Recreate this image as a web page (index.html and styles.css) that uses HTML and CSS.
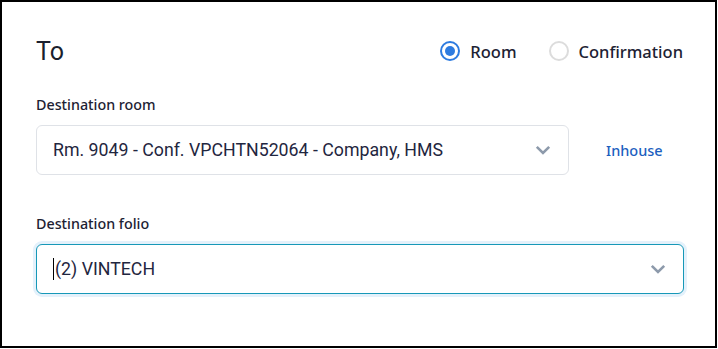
FILE: index.html
```html
<!DOCTYPE html>
<html lang="en">
  <head>
    <meta charset="UTF-8" />
    <meta name="viewport" content="width=device-width, initial-scale=1.0" />
    <title>Transfer To</title>
    <link rel="stylesheet" href="styles.css">
  </head>
  <body>
    <div class="panel">
      <div class="panel-header">
        <h2>To</h2>
        <div class="radio-group">
          <label class="radio">
            <input type="radio" name="target" value="room" checked />
            <span class="radio-mark"></span>
            <span class="radio-text">Room</span>
          </label>
          <label class="radio">
            <input type="radio" name="target" value="confirmation" />
            <span class="radio-mark"></span>
            <span class="radio-text">Confirmation</span>
          </label>
        </div>
      </div>

      <div class="form-group">
        <label class="field-label">Destination room</label>
        <div class="field-row">
          <div class="select">
            <span class="select-value">Rm. 9049 - Conf. VPCHTN52064 - Company, HMS</span>
            <svg class="chevron" width="16" height="10" viewBox="0 0 16 10"><path d="M1.8 1.8 L8 8 L14.2 1.8" fill="none" stroke="#8d9aab" stroke-width="2.6"/></svg>
          </div>
          <a href="#" class="link">Inhouse</a>
        </div>
      </div>

      <div class="form-group">
        <label class="field-label">Destination folio</label>
        <div class="select focused">
          <span class="caret"></span>
          <span class="select-value">(2) VINTECH</span>
          <svg class="chevron" width="16" height="10" viewBox="0 0 16 10"><path d="M1.8 1.8 L8 8 L14.2 1.8" fill="none" stroke="#8d9aab" stroke-width="2.6"/></svg>
        </div>
      </div>
    </div>
  </body>
</html>
```

FILE: styles.css
```css
* {
  margin: 0;
  padding: 0;
  box-sizing: border-box;
}

body {
  font-family: 'Noto Sans', 'Open Sans', sans-serif;
  background: #fff;
  color: #1d2233;
}

.panel {
  width: 717px;
  height: 348px;
  border: 2px solid #000;
  padding: 30px 31px 0 34px;
}

.panel-header {
  display: flex;
  align-items: center;
  justify-content: space-between;
  height: 38px;
}

h2 {
  font-family: 'Roboto', sans-serif;
  font-weight: 400;
  font-size: 25px;
  color: #1a1f2e;
}

.radio-group {
  display: flex;
  gap: 32px;
  margin-right: 1px;
}

.radio {
  display: flex;
  align-items: center;
  gap: 10px;
  cursor: pointer;
}

.radio input {
  display: none;
}

.radio-mark {
  width: 20px;
  height: 20px;
  border-radius: 50%;
  border: 2px solid #dcdcdc;
  display: flex;
  align-items: center;
  justify-content: center;
}

.radio input:checked + .radio-mark {
  border: 2px solid #2d7be0;
}

.radio input:checked + .radio-mark::after {
  content: '';
  width: 10px;
  height: 10px;
  border-radius: 50%;
  background: #2d7be0;
}

.radio-text {
  font-size: 16.5px;
  font-weight: 500;
  color: #1d2233;
}

.form-group {
  display: flex;
  flex-direction: column;
  gap: 11px;
  margin-top: 25px;
}

.form-group + .form-group {
  margin-top: 39px;
}

.field-label {
  font-size: 14.3px;
  font-weight: 500;
  color: #1d2233;
}

.field-row {
  display: flex;
  align-items: center;
}

.select {
  display: flex;
  align-items: center;
  height: 50px;
  padding: 0 17px 0 16px;
  border: 1px solid #dfe2e7;
  border-radius: 6px;
  background: #fff;
}

.field-row .select {
  flex: 0 0 533px;
}

.select-value {
  flex: 1;
  font-family: 'Roboto', sans-serif;
  font-size: 17.75px;
  color: #1f2640;
  white-space: nowrap;
}

.chevron {
  flex: none;
}

.select.focused {
  border-color: #1798b8;
  box-shadow: 0 0 0 3px #e4f1fb;
}

.caret {
  width: 1px;
  height: 22px;
  background: #000;
  margin-right: 1px;
}

.link {
  margin-left: 37px;
  font-size: 14.5px;
  font-weight: 500;
  color: #1d5fc0;
  text-decoration: none;
}
```
